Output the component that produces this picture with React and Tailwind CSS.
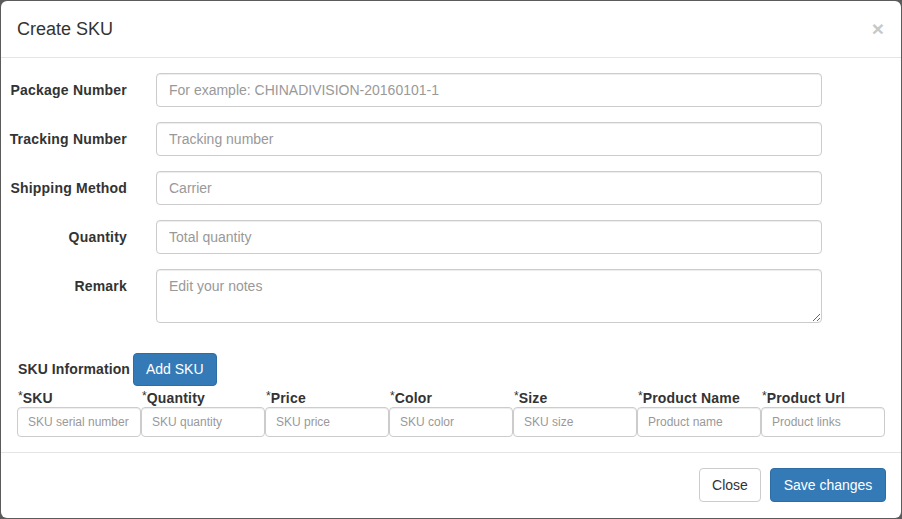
const FIELDS = [
    { label: 'Package Number', placeholder: 'For example: CHINADIVISION-20160101-1' },
    { label: 'Tracking Number', placeholder: 'Tracking number' },
    { label: 'Shipping Method', placeholder: 'Carrier' },
    { label: 'Quantity', placeholder: 'Total quantity' },
];

const SKU_COLS = [
    { label: 'SKU', placeholder: 'SKU serial number' },
    { label: 'Quantity', placeholder: 'SKU quantity' },
    { label: 'Price', placeholder: 'SKU price' },
    { label: 'Color', placeholder: 'SKU color' },
    { label: 'Size', placeholder: 'SKU size' },
    { label: 'Product Name', placeholder: 'Product name' },
    { label: 'Product Url', placeholder: 'Product links' },
];

const inputCls =
    'rounded-[4px] border border-[#cccccc] bg-white text-[#555] placeholder:text-[#999] shadow-[inset_0_1px_1px_rgba(0,0,0,0.075)] outline-none';

export default function App() {
    return (
        <div
            className="min-h-screen w-[902px] h-[519px] bg-[#5b5b5b] px-px pt-px overflow-hidden"
            style={{ fontFamily: '"Liberation Sans", Arial, sans-serif' }}
        >
            <div className="w-[900px] h-[517px] rounded-[6px] bg-white flex flex-col text-[#333]">
                {/* Header */}
                <div className="h-[57px] border-b border-[#e5e5e5] px-[16px] flex items-center justify-between">
                    <h4 className="text-[18px] leading-[26px]">Create SKU</h4>
                    <span className="text-[21px] font-bold leading-none text-[#c8c8c8] mr-[1px] -mt-[2px]">×</span>
                </div>

                {/* Body */}
                <div className="flex-1 pt-[15px] flex flex-col">
                    <div className="flex flex-col gap-[15px]">
                        {FIELDS.map((f) => (
                            <div key={f.label} className="flex items-center">
                                <label className="w-[126px] text-right text-[14px] font-bold whitespace-nowrap tracking-[0.2px]">
                                    {f.label}
                                </label>
                                <input
                                    className={`${inputCls} ml-[29px] w-[666px] h-[34px] px-3 text-[14px]`}
                                    placeholder={f.placeholder}
                                />
                            </div>
                        ))}
                        <div className="flex items-start">
                            <label className="w-[126px] text-right text-[14px] font-bold pt-[7px] tracking-[0.2px]">Remark</label>
                            <textarea
                                className={`${inputCls} ml-[29px] w-[666px] h-[54px] px-3 py-[6px] text-[14px] resize-y`}
                                placeholder="Edit your notes"
                            />
                        </div>
                    </div>

                    <div className="mt-[30px] pl-[17px] flex items-center">
                        <span className="text-[14px] font-bold tracking-[0.1px]">SKU Information</span>
                        <button className="ml-[3px] h-[33px] px-[12px] rounded-[4px] bg-[#337ab7] border border-[#2e6da4] text-white text-[14px]">
                            Add SKU
                        </button>
                    </div>

                    <div className="pl-[16px] flex mt-[1px]">
                        {SKU_COLS.map((c) => (
                            <div key={c.label} className="w-[124px] flex flex-col">
                                <div className="pl-[1px] h-[20px] flex items-start pt-[2px] whitespace-nowrap">
                                    <span className="text-[12px] leading-[14px]">*</span>
                                    <span className="text-[14px] leading-[18px] font-bold tracking-[0.2px]">{c.label}</span>
                                </div>
                                <input
                                    className={`${inputCls} w-[124px] h-[30px] text-[12px] px-[10px]`}
                                    placeholder={c.placeholder}
                                />
                            </div>
                        ))}
                    </div>
                </div>

                {/* Footer */}
                <div className="h-[66px] border-t border-[#e5e5e5] flex items-start justify-end pt-[15px] pr-[15px]">
                    <button className="h-[34px] w-[62px] rounded-[4px] border border-[#ccc] bg-white text-[14px] text-[#333]">
                        Close
                    </button>
                    <button className="ml-[9px] h-[34px] w-[116px] rounded-[4px] border border-[#2e6da4] bg-[#337ab7] text-[14px] text-white">
                        Save changes
                    </button>
                </div>
            </div>
        </div>
    );
}
